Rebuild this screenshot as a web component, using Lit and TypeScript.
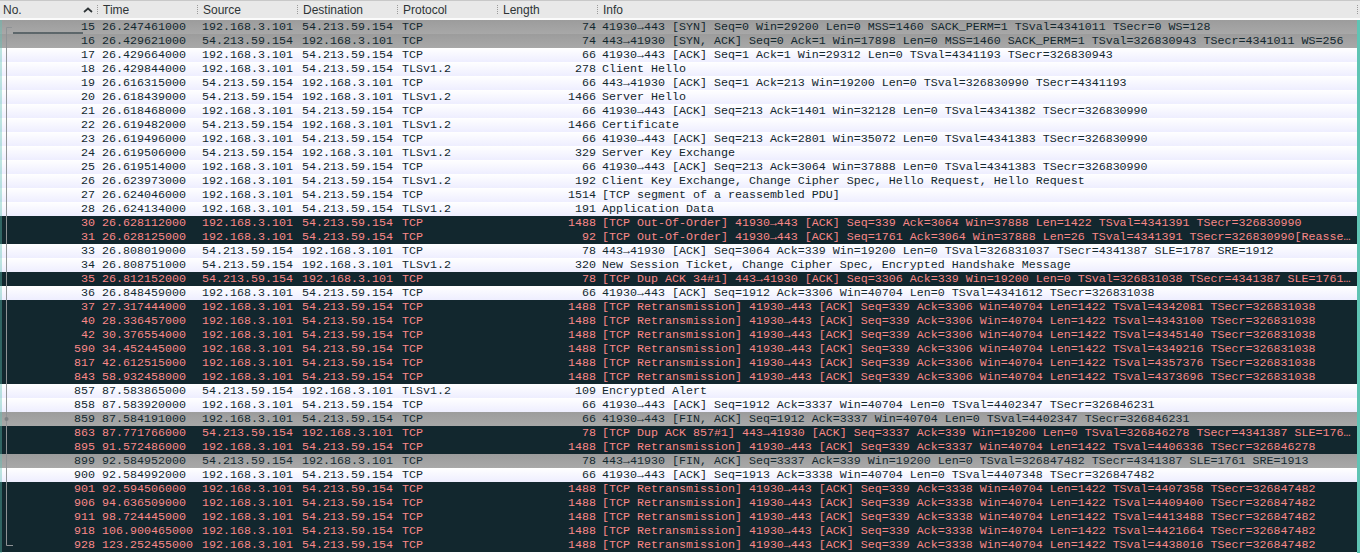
import { LitElement, html, css } from "lit";
import { customElement } from "lit/decorators.js";

const O = 0, I = 1;
const rows: [string, string, number, string, string, string, string][] = [
  ["15","26.247461000",O,"TCP","74","41930→443 [SYN] Seq=0 Win=29200 Len=0 MSS=1460 SACK_PERM=1 TSval=4341011 TSecr=0 WS=128","g"],
  ["16","26.429621000",I,"TCP","74","443→41930 [SYN, ACK] Seq=0 Ack=1 Win=17898 Len=0 MSS=1460 SACK_PERM=1 TSval=326830943 TSecr=4341011 WS=256","g"],
  ["17","26.429664000",O,"TCP","66","41930→443 [ACK] Seq=1 Ack=1 Win=29312 Len=0 TSval=4341193 TSecr=326830943","n"],
  ["18","26.429844000",O,"TLSv1.2","278","Client Hello","n"],
  ["19","26.616315000",I,"TCP","66","443→41930 [ACK] Seq=1 Ack=213 Win=19200 Len=0 TSval=326830990 TSecr=4341193","n"],
  ["20","26.618439000",I,"TLSv1.2","1466","Server Hello","n"],
  ["21","26.618468000",O,"TCP","66","41930→443 [ACK] Seq=213 Ack=1401 Win=32128 Len=0 TSval=4341382 TSecr=326830990","n"],
  ["22","26.619482000",I,"TLSv1.2","1466","Certificate","n"],
  ["23","26.619496000",O,"TCP","66","41930→443 [ACK] Seq=213 Ack=2801 Win=35072 Len=0 TSval=4341383 TSecr=326830990","n"],
  ["24","26.619506000",I,"TLSv1.2","329","Server Key Exchange","n"],
  ["25","26.619514000",O,"TCP","66","41930→443 [ACK] Seq=213 Ack=3064 Win=37888 Len=0 TSval=4341383 TSecr=326830990","n"],
  ["26","26.623973000",O,"TLSv1.2","192","Client Key Exchange, Change Cipher Spec, Hello Request, Hello Request","n"],
  ["27","26.624046000",O,"TCP","1514","[TCP segment of a reassembled PDU]","n"],
  ["28","26.624134000",O,"TLSv1.2","191","Application Data","n"],
  ["30","26.628112000",O,"TCP","1488","[TCP Out-Of-Order] 41930→443 [ACK] Seq=339 Ack=3064 Win=37888 Len=1422 TSval=4341391 TSecr=326830990","d"],
  ["31","26.628125000",O,"TCP","92","[TCP Out-Of-Order] 41930→443 [ACK] Seq=1761 Ack=3064 Win=37888 Len=26 TSval=4341391 TSecr=326830990[Reasse…","d"],
  ["33","26.808019000",I,"TCP","78","443→41930 [ACK] Seq=3064 Ack=339 Win=19200 Len=0 TSval=326831037 TSecr=4341387 SLE=1787 SRE=1912","n"],
  ["34","26.808751000",I,"TLSv1.2","320","New Session Ticket, Change Cipher Spec, Encrypted Handshake Message","n"],
  ["35","26.812152000",I,"TCP","78","[TCP Dup ACK 34#1] 443→41930 [ACK] Seq=3306 Ack=339 Win=19200 Len=0 TSval=326831038 TSecr=4341387 SLE=1761…","d"],
  ["36","26.848459000",O,"TCP","66","41930→443 [ACK] Seq=1912 Ack=3306 Win=40704 Len=0 TSval=4341612 TSecr=326831038","n"],
  ["37","27.317444000",O,"TCP","1488","[TCP Retransmission] 41930→443 [ACK] Seq=339 Ack=3306 Win=40704 Len=1422 TSval=4342081 TSecr=326831038","d"],
  ["40","28.336457000",O,"TCP","1488","[TCP Retransmission] 41930→443 [ACK] Seq=339 Ack=3306 Win=40704 Len=1422 TSval=4343100 TSecr=326831038","d"],
  ["42","30.376554000",O,"TCP","1488","[TCP Retransmission] 41930→443 [ACK] Seq=339 Ack=3306 Win=40704 Len=1422 TSval=4345140 TSecr=326831038","d"],
  ["590","34.452445000",O,"TCP","1488","[TCP Retransmission] 41930→443 [ACK] Seq=339 Ack=3306 Win=40704 Len=1422 TSval=4349216 TSecr=326831038","d"],
  ["817","42.612515000",O,"TCP","1488","[TCP Retransmission] 41930→443 [ACK] Seq=339 Ack=3306 Win=40704 Len=1422 TSval=4357376 TSecr=326831038","d"],
  ["843","58.932458000",O,"TCP","1488","[TCP Retransmission] 41930→443 [ACK] Seq=339 Ack=3306 Win=40704 Len=1422 TSval=4373696 TSecr=326831038","d"],
  ["857","87.583865000",I,"TLSv1.2","109","Encrypted Alert","n"],
  ["858","87.583920000",O,"TCP","66","41930→443 [ACK] Seq=1912 Ack=3337 Win=40704 Len=0 TSval=4402347 TSecr=326846231","n"],
  ["859","87.584191000",O,"TCP","66","41930→443 [FIN, ACK] Seq=1912 Ack=3337 Win=40704 Len=0 TSval=4402347 TSecr=326846231","g"],
  ["863","87.771766000",I,"TCP","78","[TCP Dup ACK 857#1] 443→41930 [ACK] Seq=3337 Ack=339 Win=19200 Len=0 TSval=326846278 TSecr=4341387 SLE=176…","d"],
  ["895","91.572486000",O,"TCP","1488","[TCP Retransmission] 41930→443 [ACK] Seq=339 Ack=3337 Win=40704 Len=1422 TSval=4406336 TSecr=326846278","d"],
  ["899","92.584952000",I,"TCP","78","443→41930 [FIN, ACK] Seq=3337 Ack=339 Win=19200 Len=0 TSval=326847482 TSecr=4341387 SLE=1761 SRE=1913","g"],
  ["900","92.584992000",O,"TCP","66","41930→443 [ACK] Seq=1913 Ack=3338 Win=40704 Len=0 TSval=4407348 TSecr=326847482","n"],
  ["901","92.594506000",O,"TCP","1488","[TCP Retransmission] 41930→443 [ACK] Seq=339 Ack=3338 Win=40704 Len=1422 TSval=4407358 TSecr=326847482","d"],
  ["906","94.636509000",O,"TCP","1488","[TCP Retransmission] 41930→443 [ACK] Seq=339 Ack=3338 Win=40704 Len=1422 TSval=4409400 TSecr=326847482","d"],
  ["911","98.724445000",O,"TCP","1488","[TCP Retransmission] 41930→443 [ACK] Seq=339 Ack=3338 Win=40704 Len=1422 TSval=4413488 TSecr=326847482","d"],
  ["918","106.900465000",O,"TCP","1488","[TCP Retransmission] 41930→443 [ACK] Seq=339 Ack=3338 Win=40704 Len=1422 TSval=4421664 TSecr=326847482","d"],
  ["928","123.252455000",O,"TCP","1488","[TCP Retransmission] 41930→443 [ACK] Seq=339 Ack=3338 Win=40704 Len=1422 TSval=4438016 TSecr=326847482","d"],
];

const HOST = "192.168.3.101";
const PEER = "54.213.59.154";

@customElement("app-root")
export class AppRoot extends LitElement {
  static styles = css`
    :host { display: block; width: 1360px; height: 553px; overflow: hidden; background: #fff; position: relative; }
    .head { display: grid; grid-template-columns: repeat(6, 100px) 1fr; height: 20px; box-sizing: border-box;
      border-top: 1px solid #c8c8c8; border-bottom: 2px solid #fbfbfb; background: #e8e8e8;
      font: 12px "Liberation Sans", Arial, sans-serif; color: #2e3436; }
    .hc { display: flex; align-items: center; position: relative; padding-left: 3px; white-space: nowrap; }
    .grip { height: 9px; border-left: 1px dotted #9a9a9a; position: absolute; left: -3px; top: 4px; }
    .grip.end { left: auto; right: 2px; }
    .row { display: grid; grid-template-columns: repeat(6, 100px) 1fr; height: 14px; padding-right: 3px;
      font: 11.67px/14px "Liberation Mono", monospace; white-space: pre; overflow: hidden; }
    .row > span { overflow: hidden; padding-left: 2px; }
    .row > .r { text-align: right; padding-left: 0; padding-right: 4px; }
    .row > .no { padding-right: 5px; }
    .n { background: linear-gradient(#fff, #eeeeff); color: #12272e; }
    .g { background: linear-gradient(#9c9c9c, #a8a8a8); color: #12272e; }
    .d { background: #12272e; color: #f98888; }
    .overlay { position: absolute; left: 0; top: 0; pointer-events: none; }
    .strip { position: absolute; right: 0; top: 20px; width: 3px; height: 533px; background: #5fc4b4; }
    .lstrip { position: absolute; left: 0; top: 20px; width: 2px; height: 533px; background: rgba(95, 196, 180, 0.4); }
  `;

  render() {
    const heads = ["Time", "Source", "Destination", "Protocol", "Length"];
    return html`
      <div class="head">
        <div class="hc">No.</div>
        ${heads.map((h) => html`<div class="hc"><i class="grip"></i>${h}</div>`)}
        <div class="hc"><i class="grip"></i>Info<i class="grip end"></i></div>
      </div>
      ${rows.map((r) => {
        const [no, t, dir, proto, len, info, kind] = r;
        return html`<div class="row ${kind}"><span class="r no">${no}</span><span>${t}</span><span>${dir === 0 ? HOST : PEER}</span><span>${dir === 0 ? PEER : HOST}</span><span>${proto}</span><span class="r">${len}</span><span>${info}</span></div>`;
      })}
      <div class="strip"></div>
      <div class="lstrip"></div>
      <svg class="overlay" width="100" height="553">
        <path d="M84 12l4-3.5 4 3.5" fill="none" stroke="#2e3436" stroke-width="1.7"/>
        <path d="M12 27.5H6.5V545.5H13" fill="none" stroke="#8f9396" stroke-width="1"/>
        <path d="M13 33H83" stroke="#12272e" stroke-width="1" fill="none"/>
        <circle cx="6.5" cy="419" r="2" fill="#7d8184"/>
      </svg>
    `;
  }
}
